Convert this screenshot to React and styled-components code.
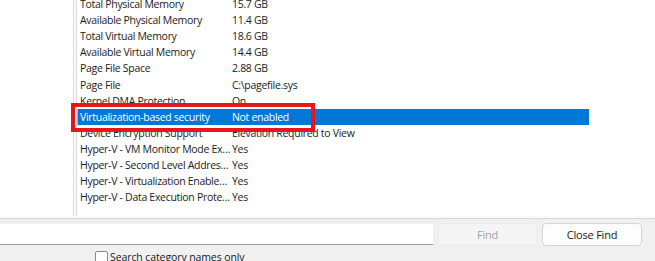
import React from 'react';
import styled, { createGlobalStyle } from 'styled-components';

const rows = [
	['Total Physical Memory', '15.7 GB'],
	['Available Physical Memory', '11.4 GB'],
	['Total Virtual Memory', '18.6 GB'],
	['Available Virtual Memory', '14.4 GB'],
	['Page File Space', '2.88 GB'],
	['Page File', 'C:\\pagefile.sys'],
	['Kernel DMA Protection', 'On'],
	['Virtualization-based security', 'Not enabled'],
	['Device Encryption Support', 'Elevation Required to View'],
	['Hyper-V - VM Monitor Mode Extensions', 'Yes'],
	['Hyper-V - Second Level Address Translation Extensions', 'Yes'],
	['Hyper-V - Virtualization Enabled in Firmware', 'Yes'],
	['Hyper-V - Data Execution Protection', 'Yes'],
];

const SELECTED = 7;

export default function App() {
	return (
		<>
			<GlobalStyle />
			<Window>
				<Panes>
					<TreePane />
					<ListPane>
						<List>
							{rows.map(([item, value], i) => (
								<Row key={item} selected={i === SELECTED}>
									<ItemCell>{item}</ItemCell>
									<ValueCell>{value}</ValueCell>
								</Row>
							))}
						</List>
					</ListPane>
					<Highlight />
				</Panes>
				<FindBar>
					<FindInput />
					<FindButton disabled>Find</FindButton>
					<CloseButton>Close Find</CloseButton>
				</FindBar>
				<OptionsRow>
					<CheckBox />
					<CheckLabel>Search category names only</CheckLabel>
				</OptionsRow>
			</Window>
		</>
	);
}

const GlobalStyle = createGlobalStyle`
	html, body {
		margin: 0;
		padding: 0;
		overflow: hidden;
		background: #f0f0f0;
	}
	body {
		font-family: "Open Sans", "Noto Sans", "Liberation Sans", sans-serif;
		font-size: 10.5px;
		letter-spacing: -0.3px;
		color: #1b1b1b;
	}
`;

const Window = styled.div`
	width: 655px;
	height: 261px;
	display: flex;
	flex-direction: column;
	background: #f0f0f0;
	overflow: hidden;
`;

const Panes = styled.div`
	position: relative;
	display: flex;
	gap: 2px;
	height: 218px;
	background: #fafafa;
	border-bottom: 1px solid #d6d6d6;
	flex-shrink: 0;
`;

const TreePane = styled.div`
	width: 73px;
	background: #fff;
	border-right: 1px solid #d9d9d9;
	margin-bottom: 2px;
`;

const ListPane = styled.div`
	flex: 1;
	background: #fff;
	border-left: 1px solid #d9d9d9;
	margin-bottom: 2px;
	overflow: hidden;
`;

const List = styled.div`
	margin-top: -4px;
	display: flex;
	flex-direction: column;
`;

const Row = styled.div`
	display: flex;
	align-items: center;
	width: 512px;
	height: 16.1px;
	padding-left: 3px;
	box-sizing: border-box;
	white-space: nowrap;
	background: ${(p) => (p.selected ? '#0078d7' : 'transparent')};
	color: ${(p) => (p.selected ? '#fff' : '#1b1b1b')};
	box-shadow: ${(p) => (p.selected ? 'inset 1px 0 0 #7ed67e' : 'none')};
`;

const ItemCell = styled.span`
	width: 151px;
	overflow: hidden;
	text-overflow: ellipsis;
	flex-shrink: 0;
`;

const ValueCell = styled.span`
	padding-left: 1px;
`;

const Highlight = styled.div`
	position: absolute;
	left: 71px;
	top: 103px;
	width: 244px;
	height: 29px;
	box-sizing: border-box;
	border: 4px solid #e8161c;
`;

const FindBar = styled.div`
	display: flex;
	align-items: center;
	height: 30px;
	padding-top: 4px;
	box-sizing: border-box;
`;

const FindInput = styled.div`
	width: 433px;
	height: 21px;
	background: #fff;
	border-bottom: 1px solid #9a9a9a;
	box-sizing: border-box;
	margin-right: 5px;
`;

const FindButton = styled.button`
	width: 99px;
	height: 23px;
	margin: 0;
	border: 1px solid #ececec;
	border-radius: 4px;
	background: #f5f5f5;
	color: #a3a3a3;
	font: inherit;
	font-size: 11px;
	letter-spacing: -0.2px;
`;

const CloseButton = styled(FindButton)`
	width: 100px;
	margin-left: 5px;
	border-color: #d5d5d5;
	background: #fdfdfd;
	color: #1b1b1b;
`;

const OptionsRow = styled.div`
	display: flex;
	align-items: center;
	gap: 2px;
	padding-left: 95px;
	margin-top: 4px;
`;

const CheckBox = styled.span`
	width: 11px;
	height: 11px;
	border: 1px solid #8a8a8a;
	border-radius: 2px;
	background: #fff;
`;

const CheckLabel = styled.span`
	font-size: 10.5px;
	letter-spacing: -0.1px;
`;
